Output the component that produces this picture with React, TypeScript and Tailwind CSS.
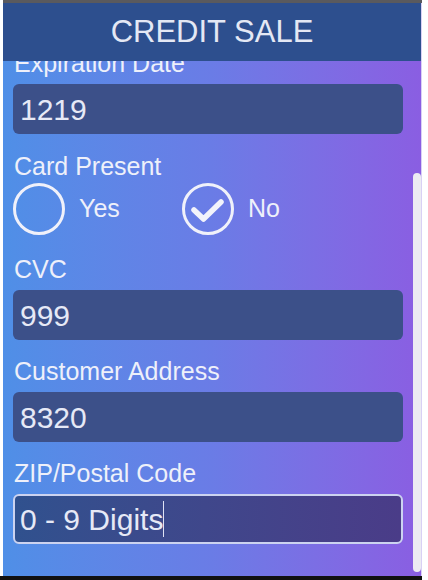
import React from 'react';

function Field({ label, value, className = '' }: { label: string; value: string; className?: string }) {
  return (
    <div className={`flex flex-col ${className}`}>
      <div className="h-[29px] leading-[29px] pl-[1px] text-[25px] text-[#eef0fa]">{label}</div>
      <div className="mt-[6px] h-[50px] rounded-[6px] bg-[#3c5089] flex items-center px-[7px] text-[30px] text-[#e6e9f6]">
        {value}
      </div>
    </div>
  );
}

function Radio({ checked, label, className = '' }: { checked?: boolean; label: string; className?: string }) {
  return (
    <div className={`flex items-center ${className}`}>
      <div className="w-[52px] h-[52px] shrink-0 rounded-full border-[3px] border-[#f0f1fa] relative">
        {checked && (
          <svg width="52" height="52" viewBox="0 0 52 52" className="absolute -left-[3px] -top-[3px]">
            <path d="M12 27 L21.5 36 L39 19" fill="none" stroke="#f2f3fb" strokeWidth="5.5" strokeLinecap="round" strokeLinejoin="round" />
          </svg>
        )}
      </div>
      <span className="ml-[14px] text-[25px] text-[#eef0fa]">{label}</span>
    </div>
  );
}

export default function App() {
  return (
    <div className="w-[428px] h-[580px] bg-white flex flex-col overflow-hidden font-['Liberation_Sans',Arial,sans-serif]">
      <div className="h-[3px] bg-[#5a5a5e] ml-[3px] mr-[6px]" />
      <div className="flex-1 flex pl-[3px]">
        <div className="w-[419px] flex flex-col border-r border-[#d9d0f4]">
          {/* Header */}
          <div className="h-[58px] bg-[#2d4f8e] flex items-center justify-center text-[31px] text-[#e4e8f4]">
            CREDIT SALE
          </div>

          {/* Scrolled form */}
          <div className="flex-1 relative overflow-hidden bg-linear-to-r from-[#4f8fe7] via-[#6a7ce6] to-[#8a5ee2]">
            <div className="flex flex-col -mt-[12px] pl-[10px] pr-[18px]">
              <Field label="Expiration Date" value="1219" />

              <div className="mt-[18px] h-[29px] leading-[29px] pl-[1px] text-[25px] text-[#eef0fa]">Card Present</div>
              <div className="mt-[2px] flex items-center">
                <Radio label="Yes" className="w-[169px]" />
                <Radio checked label="No" />
              </div>

              <Field label="CVC" value="999" className="mt-[20px]" />
              <Field label="Customer Address" value="8320" className="mt-[17px]" />

              <div className="mt-[17px] flex flex-col">
                <div className="h-[29px] leading-[29px] pl-[1px] text-[25px] text-[#eef0fa]">ZIP/Postal Code</div>
                <div className="mt-[6px] h-[50px] rounded-[6px] border-2 border-[#ccd3f0] bg-linear-to-r from-[#30518e] to-[#4a3c88] flex items-center px-[5px] text-[30px] text-[#e6e9f6]">
                  <span>0 - 9 Digits</span>
                  <span className="w-px h-[36px] bg-[#dfe2f4]" />
                </div>
              </div>
            </div>

            {/* scrollbar thumb */}
            <div className="absolute left-[410px] top-[112px] w-[8px] h-[399px] rounded-full bg-[#ecebf2]" />
          </div>
        </div>
      </div>
      <div className="h-[4px] bg-[#111] mr-[6px]" />
    </div>
  );
}
